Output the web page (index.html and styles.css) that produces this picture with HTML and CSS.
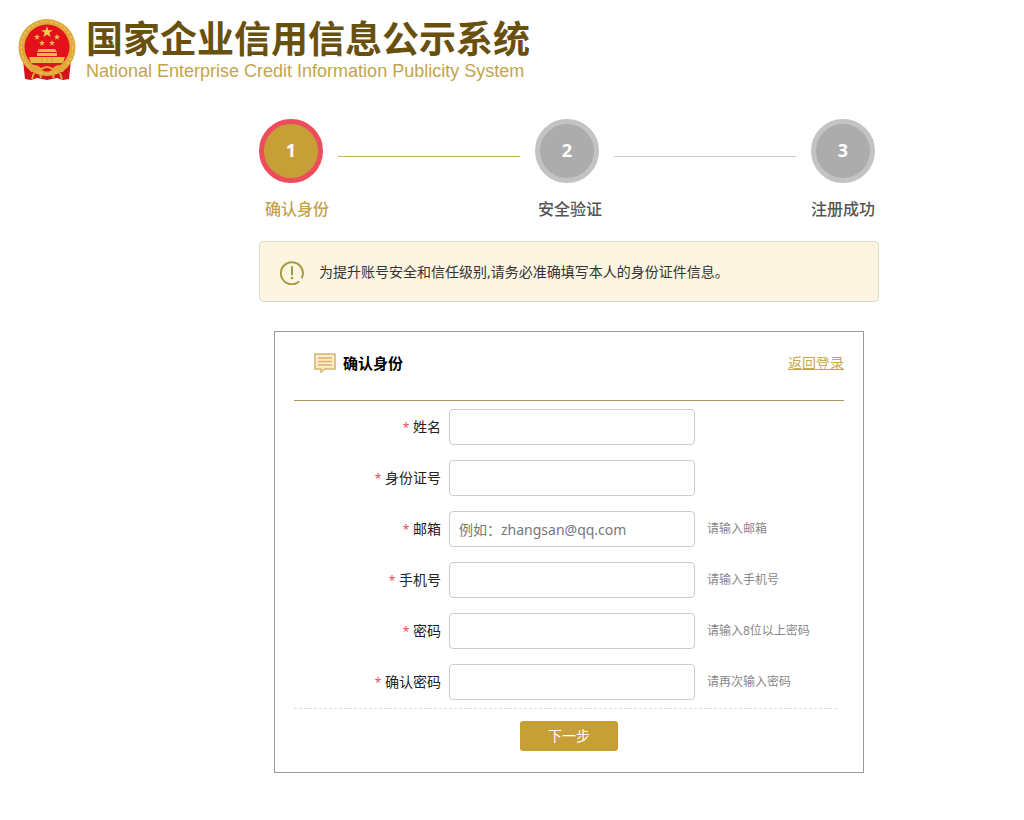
FILE: index.html
```html
<!DOCTYPE html>
<html lang="zh-CN">
<head>
    <meta charset="UTF-8">
    <meta name="viewport" content="width=device-width, initial-scale=1.0">
    <title>国家企业信用信息公示系统</title>
    <link rel="stylesheet" href="styles.css">
</head>
<body>
    <header class="header">
        <svg class="emblem" viewBox="0 0 60 64" aria-hidden="true">
            <path d="M6 42 L8 61 L14 62 L20 60 L30 62 L40 60 L46 62 L52 61 L54 42 Z" fill="#d5121c"/>
            <circle cx="30" cy="29.500" r="28.500" fill="#dfa83a"/>
            <circle cx="30" cy="29.500" r="26" fill="none" stroke="#e9bd50" stroke-width="2" stroke-dasharray="3 2"/>
            <circle cx="30" cy="29" r="22.500" fill="#e3111b"/>
            <path d="M30 8 L31.400 12.200 L35.800 12.200 L32.300 14.800 L33.600 19 L30 16.400 L26.400 19 L27.700 14.800 L24.200 12.200 L28.600 12.200 Z" fill="#f3cf58"/>
            <g fill="#eebd4d">
                <path id="star" d="M20 16 L20.800 18.100 L23 18.100 L21.200 19.500 L21.900 21.700 L20 20.400 L18.100 21.700 L18.800 19.500 L17 18.100 L19.200 18.100 Z"/>
                <use href="#star" x="20"/>
                <use href="#star" x="5" y="6"/>
                <use href="#star" x="15" y="6"/>
            </g>
            <path d="M22 31 H38 L40 34 H20 Z M20 35 H40 V38 H20 Z M12 39 H48 L46 45 H14 Z" fill="#ebb946"/>
            <path d="M25 40 V44 M30 40 V44 M35 40 V44" stroke="#dc9b32" stroke-width="1"/>
            <path d="M10 48 Q20 45 24 50 Q30 46 36 50 Q40 45 50 48 L46 54 L38 53 Q30 58 22 53 L14 54 Z" fill="#e0a83a"/>
            <path d="M25 52 Q30 48 35 52 Q30 55 25 52 Z" fill="#d5121c"/>
            <path d="M17 55 L15 61 M23 56 L24 60 M37 56 L36 60 M43 55 L45 61" stroke="#e0a83a" stroke-width="2"/>
        </svg>
        <div class="brand">
            <h1>国家企业信用信息公示系统</h1>
            <p>National Enterprise Credit Information Publicity System</p>
        </div>
    </header>

    <main class="main">
        <div class="steps">
            <span class="circle active">1</span>
            <span class="line active"></span>
            <span class="circle">2</span>
            <span class="line"></span>
            <span class="circle">3</span>
        </div>
        <div class="step-names">
            <span class="active">确认身份</span>
            <span>安全验证</span>
            <span>注册成功</span>
        </div>

        <div class="notice">
            <svg class="notice-icon" viewBox="0 0 24 26" aria-hidden="true">
                <path d="M18.500 23 A11 11 0 1 1 22 18.500" fill="none" stroke="#a89a45" stroke-width="2" stroke-linecap="round"/>
                <path d="M12 8 V15.500" stroke="#a89a45" stroke-width="2" stroke-linecap="round"/>
                <circle cx="12" cy="19" r="1.300" fill="#a89a45"/>
            </svg>
            <p>为提升账号安全和信任级别,请务必准确填写本人的身份证件信息。</p>
        </div>

        <form class="card">
            <div class="card-head">
                <svg class="msg-icon" viewBox="0 0 22 20" aria-hidden="true">
                    <path d="M1 1 H21 V16 H11 L7 19 V16 H1 Z" fill="#fbecc9" stroke="#d6b272" stroke-width="1.500"/>
                    <path d="M4 5 H18 M4 8.500 H18 M4 12 H18" stroke="#d6b272" stroke-width="1.300"/>
                </svg>
                <h2>确认身份</h2>
                <a href="#">返回登录</a>
            </div>
            <div class="fields">
                <div class="row">
                    <label for="name"><i>*</i> 姓名</label>
                    <input type="text" id="name" name="name">
                </div>
                <div class="row">
                    <label for="idcard"><i>*</i> 身份证号</label>
                    <input type="text" id="idcard" name="idcard">
                </div>
                <div class="row">
                    <label for="email"><i>*</i> 邮箱</label>
                    <input type="email" id="email" name="email" placeholder="例如：zhangsan@qq.com">
                    <span class="hint">请输入邮箱</span>
                </div>
                <div class="row">
                    <label for="phone"><i>*</i> 手机号</label>
                    <input type="tel" id="phone" name="phone">
                    <span class="hint">请输入手机号</span>
                </div>
                <div class="row">
                    <label for="password"><i>*</i> 密码</label>
                    <input type="password" id="password" name="password">
                    <span class="hint">请输入8位以上密码</span>
                </div>
                <div class="row">
                    <label for="password2"><i>*</i> 确认密码</label>
                    <input type="password" id="password2" name="password2">
                    <span class="hint">请再次输入密码</span>
                </div>
            </div>
            <div class="actions">
                <button type="submit">下一步</button>
            </div>
        </form>
    </main>
</body>
</html>
```
FILE: styles.css
```css
* {
    box-sizing: border-box;
}

body {
    margin: 0;
    background: #fff;
    color: #222;
    font-family: "Noto Sans", "Noto Sans CJK SC", sans-serif;
    font-size: 14px;
    line-height: 20px;
}

h1, h2, p {
    margin: 0;
}

/* header */
.header {
    display: flex;
    gap: 9px;
    padding: 18px 17px 0;
}

.emblem {
    width: 60px;
    height: 64px;
}

.brand h1 {
    color: #69500f;
    font-family: "Noto Sans CJK SC", sans-serif;
    font-size: 37px;
    line-height: 38px;
}

.brand p {
    margin-top: 4px;
    color: #c4a44a;
    font-family: "Liberation Sans", sans-serif;
    font-size: 18px;
    line-height: 22px;
}

.main {
    max-width: 960px;
    margin: 37px 145px 48px 259px;
}

/* steps */
.steps {
    display: flex;
    align-items: center;
    gap: 15px;
    padding-right: 4px;
}

.circle {
    width: 64px;
    height: 64px;
    border: 5px solid #c3c3c3;
    border-radius: 50%;
    background: #acacac;
    color: #fff;
    font-size: 18px;
    font-weight: bold;
    line-height: 52px;
    text-align: center;
}

.circle.active {
    border-color: #ed4c5c;
    background: #c6a037;
}

.line {
    flex: 1;
    height: 1px;
    margin-top: 10px;
    background: #ccc;
}

.line.active {
    background: #c9b469;
}

.step-names {
    display: flex;
    justify-content: space-between;
    margin-top: 16px;
    padding: 0 4px 0 6px;
    color: #555;
    font-size: 16px;
    font-weight: 500;
    line-height: 20px;
}

.step-names .active {
    color: #c4a24a;
}

.notice {
    display: flex;
    align-items: center;
    gap: 15px;
    height: 61px;
    margin-top: 22px;
    padding: 0 20px;
    border: 1px solid #dcdccb;
    border-radius: 4px;
    background: #fcf5e2;
    color: #333;
}

.notice-icon {
    width: 24px;
    height: 26px;
}

/* form */
.card {
    margin: 29px 15px 0;
    padding: 0 19px 21px;
    border: 1px solid #999;
}

.card-head {
    display: flex;
    align-items: center;
    height: 69px;
    padding: 0 0 6px 20px;
    border-bottom: 1px solid #a39a5c;
}

.msg-icon {
    width: 22px;
    height: 20px;
    margin-right: 7px;
}

.card-head h2 {
    color: #000;
    font-size: 15px;
}

.card-head a {
    margin-left: auto;
    color: #c9a750;
}

.fields {
    display: grid;
    gap: 15px;
    margin-right: 7px;
    padding: 8px 0;
    border-bottom: 1px dashed #ddd;
}

.row {
    display: flex;
    align-items: center;
}

.row label {
    width: 147px;
    margin-right: 8px;
    text-align: right;
}

.row i {
    color: #e85050;
    font-size: 12px;
    font-style: normal;
}

.row input {
    width: 246px;
    height: 36px;
    padding: 0 9px;
    border: 1px solid #ccc;
    border-radius: 4px;
    font: inherit;
}

.row input::placeholder {
    color: #777;
}

.hint {
    margin-left: 12px;
    color: #888;
    font-size: 12px;
}

.actions {
    padding-top: 12px;
    text-align: center;
}

.actions button {
    width: 98px;
    height: 30px;
    padding: 0;
    border: 0;
    border-radius: 3px;
    background: #c6a037;
    color: #fff;
    font: inherit;
    cursor: pointer;
}
```
